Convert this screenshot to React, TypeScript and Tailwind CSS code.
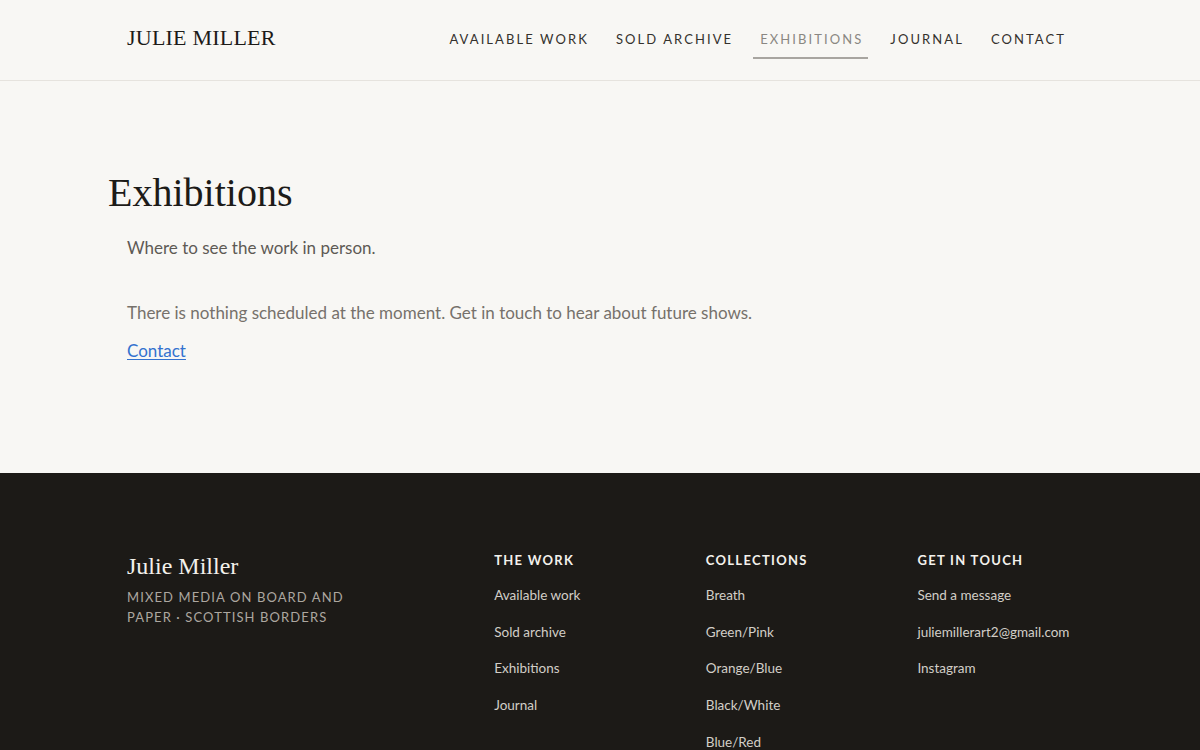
const sans = "font-['Lato','Open_Sans',sans-serif]"
const serif = "font-['Liberation_Serif','Times_New_Roman',serif]"

const nav = [
  { label: "Available work" },
  { label: "Sold archive" },
  { label: "Exhibitions", active: true },
  { label: "Journal" },
  { label: "Contact" },
]

const footerCols = [
  { title: "The work", links: ["Available work", "Sold archive", "Exhibitions", "Journal"] },
  { title: "Collections", links: ["Breath", "Green/Pink", "Orange/Blue", "Black/White", "Blue/Red"] },
  { title: "Get in touch", links: ["Send a message", "juliemillerart2@gmail.com", "Instagram"] },
]

function Header() {
  return (
    <header className="h-[81px] border-b border-[#e6e3de] bg-[#f8f7f4]">
      <div className="mx-auto flex h-full w-[946px] items-center justify-between">
        <a href="#" className={`${serif} text-[22px] tracking-[0.01em] text-[#1d1b18] pb-[5px]`}>
          JULIE MILLER
        </a>
        <nav className="flex items-center gap-[15px] pr-[2px]">
          {nav.map((item) => (
            <a
              key={item.label}
              href="#"
              className={`${sans} pl-[7px] pr-[5px] pt-[9px] pb-[8px] text-[13px] leading-[19px] uppercase tracking-[0.16em] border-b-2 ${
                item.active ? "border-[#a8a5a0] text-[#8a8782]" : "border-transparent text-[#34312d]"
              }`}
            >
              {item.label}
            </a>
          ))}
        </nav>
      </div>
    </header>
  )
}

function Main() {
  return (
    <main className="bg-[#f8f7f4] h-[392px]">
      <div className="mx-auto w-[946px] pt-[92px]">
        <h1 className={`${serif} -ml-[19px] text-[40px] leading-none text-[#1d1b18]`}>Exhibitions</h1>
        <p className={`${sans} mt-[22px] text-[17px] leading-[26px] text-[#5e5a55]`}>Where to see the work in person.</p>
        <p className={`${sans} mt-[39px] text-[17px] leading-[26px] text-[#76716b]`}>
          There is nothing scheduled at the moment. Get in touch to hear about future shows.
        </p>
        <a href="#" className={`${sans} mt-[12px] inline-block text-[17px] leading-[26px] text-[#3372cf] underline underline-offset-2`}>
          Contact
        </a>
      </div>
    </main>
  )
}

function Footer() {
  return (
    <footer className="bg-[#1c1a17] pt-[78px] pb-[40px]">
      <div className="mx-auto grid w-[946px] grid-cols-[2fr_1fr_1fr_1fr] gap-x-[56px]">
        <div>
          <div className={`${serif} text-[24px] leading-[30px] text-[#f3f1ec]`}>Julie Miller</div>
          <p className={`${sans} mt-[6px] max-w-[230px] text-[13px] leading-[20px] uppercase tracking-[0.085em] text-[#aca7a0]`}>
            Mixed media on board and paper · Scottish Borders
          </p>
        </div>
        {footerCols.map((col) => (
          <div key={col.title} className="-mt-[1px]">
            <h3 className={`${sans} text-[13px] leading-[20px] font-bold uppercase tracking-[0.1em] text-[#f3f1ec]`}>{col.title}</h3>
            <ul className="mt-[16px] flex flex-col gap-[17.7px]">
              {col.links.map((l) => (
                <li key={l} className="text-[13.5px] leading-[19px]">
                  <a href="#" className={`${sans} text-[#d2cec7]`}>
                    {l}
                  </a>
                </li>
              ))}
            </ul>
          </div>
        ))}
      </div>
    </footer>
  )
}

export default function App() {
  return (
    <div className="min-h-screen bg-[#f8f7f4]">
      <Header />
      <Main />
      <Footer />
    </div>
  )
}
